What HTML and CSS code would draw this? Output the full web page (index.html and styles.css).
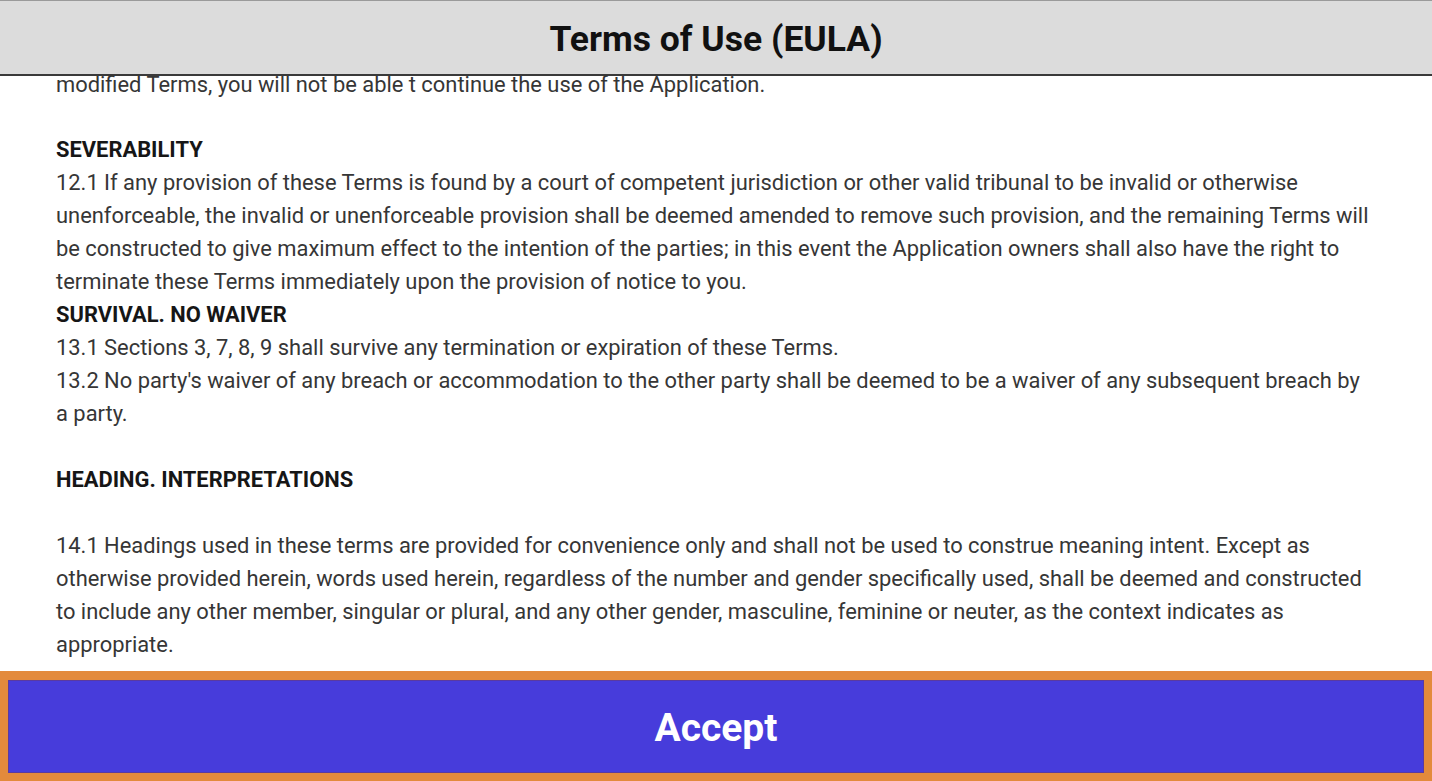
FILE: index.html
```
<!DOCTYPE html>
<html>
<head>
<meta charset="utf-8">
<link rel="stylesheet" href="styles.css">
</head>
<body>
<div class="screen">
  <header class="topbar">
    <h1 class="title">Terms of Use (EULA)</h1>
  </header>
  <main class="viewport">
    <div class="doc">
      <p class="line first">modified Terms, you will not be able t continue the use of the Application.</p>
      <p class="line blank">&nbsp;</p>
      <p class="line head">SEVERABILITY</p>
      <p class="line">12.1 If any provision of these Terms is found by a court of competent jurisdiction or other valid tribunal to be invalid or otherwise<br>unenforceable, the invalid or unenforceable provision shall be deemed amended to remove such provision, and the remaining Terms will<br>be constructed to give maximum effect to the intention of the parties; in this event the Application owners shall also have the right to<br>terminate these Terms immediately upon the provision of notice to you.</p>
      <p class="line head">SURVIVAL. NO WAIVER</p>
      <p class="line">13.1 Sections 3, 7, 8, 9 shall survive any termination or expiration of these Terms.</p>
      <p class="line">13.2 No party's waiver of any breach or accommodation to the other party shall be deemed to be a waiver of any subsequent breach by<br>a party.</p>
      <p class="line blank">&nbsp;</p>
      <p class="line head">HEADING. INTERPRETATIONS</p>
      <p class="line blank">&nbsp;</p>
      <p class="line">14.1 Headings used in these terms are provided for convenience only and shall not be used to construe meaning intent. Except as<br>otherwise provided herein, words used herein, regardless of the number and gender specifically used, shall be deemed and constructed<br>to include any other member, singular or plural, and any other gender, masculine, feminine or neuter, as the context indicates as<br>appropriate.</p>
    </div>
  </main>
  <footer class="actions">
    <button class="accept">Accept</button>
  </footer>
</div>
</body>
</html>
```
FILE: styles.css
```
html, body {
  margin: 0;
  padding: 0;
  height: 100%;
  background: #ffffff;
}

.screen {
  display: flex;
  flex-direction: column;
  height: 781px;
  width: 1432px;
  overflow: hidden;
  font-family: Roboto, "Liberation Sans", sans-serif;
}

.topbar {
  flex: 0 0 auto;
  background: #dcdcdc;
  border-top: 1px solid #9a9a9a;
  border-bottom: 2px solid #3a3a3a;
  box-sizing: border-box;
  height: 76px;
  display: flex;
  align-items: center;
  justify-content: center;
}

.title {
  margin: 0;
  font-size: 35.5px;
  font-weight: 700;
  color: #111111;
  padding-top: 2px;
}

.viewport {
  flex: 1 1 auto;
  min-height: 0;
}

.doc {
  padding: 0 20px 0 56px;
}

.line {
  margin: 0;
  font-size: 21.9px;
  line-height: 33px;
  color: #363636;
  white-space: nowrap;
}

.first {
  line-height: 18px;
  margin-bottom: 6px;
}

.head {
  font-weight: 700;
  color: #161616;
}

.actions {
  flex: 0 0 auto;
  height: 110px;
  box-sizing: border-box;
  background: #e38a3c;
  padding: 9px 8px 8px 8px;
  display: flex;
}

.accept {
  flex: 1 1 auto;
  border: 1px solid #5a3aa0;
  background: #473cdb;
  color: #ffffff;
  font-family: Roboto, "Liberation Sans", sans-serif;
  font-size: 39px;
  font-weight: 700;
  padding: 2px 0 0 0;
  margin: 0;
}
```
